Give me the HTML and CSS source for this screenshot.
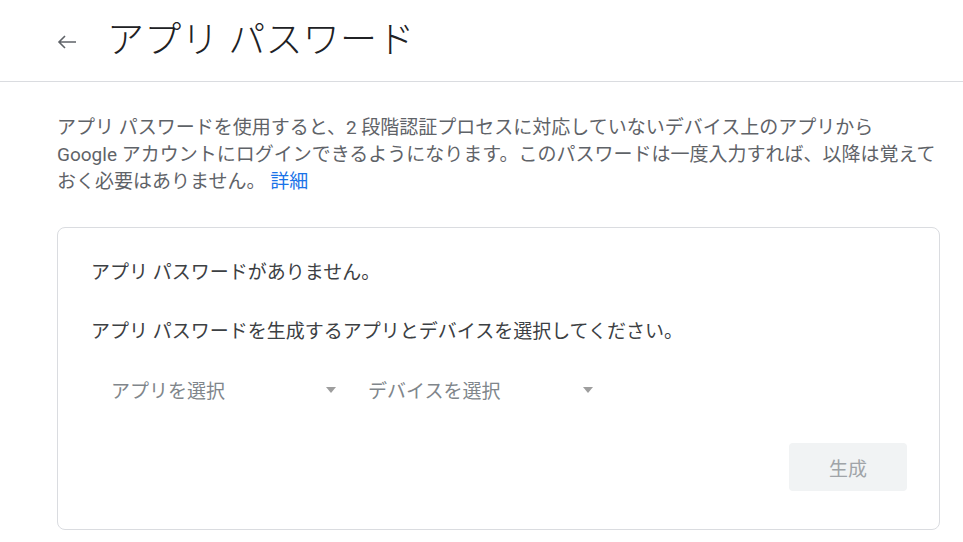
FILE: index.html
```html
<!DOCTYPE html>
<html lang="ja">
<head>
  <meta charset="UTF-8">
  <title>アプリ パスワード</title>
  <link rel="stylesheet" href="styles.css">
</head>
<body>
  <header class="header">
    <a class="back" href="#" aria-label="戻る">
      <svg width="20" height="14" viewBox="0 0 20 14">
        <path d="M19 7H2M8 1L2 7l6 6" fill="none" stroke="#5f6368" stroke-width="1.6"/>
      </svg>
    </a>
    <h1 class="title">アプリ パスワード</h1>
  </header>

  <main class="content">
    <p class="intro">アプリ パスワードを使用すると、2 段階認証プロセスに対応していないデバイス上のアプリから<br>Google アカウントにログインできるようになります。このパスワードは一度入力すれば、以降は覚えて<br>おく必要はありません。 <a class="link" href="#">詳細</a></p>

    <div class="card">
      <p class="card-text">アプリ パスワードがありません。</p>
      <p class="card-text second">アプリ パスワードを生成するアプリとデバイスを選択してください。</p>

      <div class="selects">
        <div class="select">
          <span>アプリを選択</span>
          <span class="caret"></span>
        </div>
        <div class="select">
          <span>デバイスを選択</span>
          <span class="caret"></span>
        </div>
      </div>

      <div class="actions">
        <button class="generate" disabled>生成</button>
      </div>
    </div>
  </main>
</body>
</html>
```

FILE: styles.css
```css
body {
  margin: 0;
  font-family: Roboto, "Noto Sans CJK JP", sans-serif;
  background: #fff;
  color: #202124;
}
.header {
  display: flex;
  align-items: center;
  padding: 19px 0 18px 57px;
  border-bottom: 1px solid #dadce0;
}
.back {
  display: flex;
  width: 20px;
  height: 14px;
  margin-right: 30px;
  margin-top: 2px;
}
.title {
  margin: 0;
  font-size: 37px;
  font-weight: 300;
  line-height: 44px;
  letter-spacing: 0.3px;
  color: #202124;
}
.content {
  padding: 0 0 0 57px;
}
.intro {
  margin: 32px 0 0;
  font-size: 19px;
  line-height: 27px;
  color: #5f6368;
  white-space: nowrap;
}
.link {
  color: #1a73e8;
  text-decoration: none;
}
.card {
  width: 883px;
  box-sizing: border-box;
  margin-top: 32px;
  padding: 31px 32px 38px 33px;
  border: 1px solid #dadce0;
  border-radius: 8px;
}
.card-text {
  margin: 0;
  font-size: 19px;
  line-height: 27px;
  color: #3c4043;
}
.card-text.second {
  margin-top: 32px;
}
.selects {
  display: flex;
  gap: 2px;
  margin-top: 20px;
}
.select {
  display: flex;
  align-items: center;
  justify-content: space-between;
  width: 255px;
  height: 48px;
  box-sizing: border-box;
  padding: 0 10px 0 20px;
  font-size: 19px;
  color: #80868b;
}
.caret {
  width: 0;
  height: 0;
  border-left: 5.5px solid transparent;
  border-right: 5.5px solid transparent;
  border-top: 6px solid #9e9e9e;
  margin-top: 2px;
}
.actions {
  display: flex;
  justify-content: flex-end;
  margin-top: 30px;
}
.generate {
  width: 118px;
  height: 48px;
  border: none;
  border-radius: 4px;
  background: #f1f3f4;
  color: #a0a4a8;
  font-family: Roboto, "Noto Sans CJK JP", sans-serif;
  font-size: 19px;
}
```
